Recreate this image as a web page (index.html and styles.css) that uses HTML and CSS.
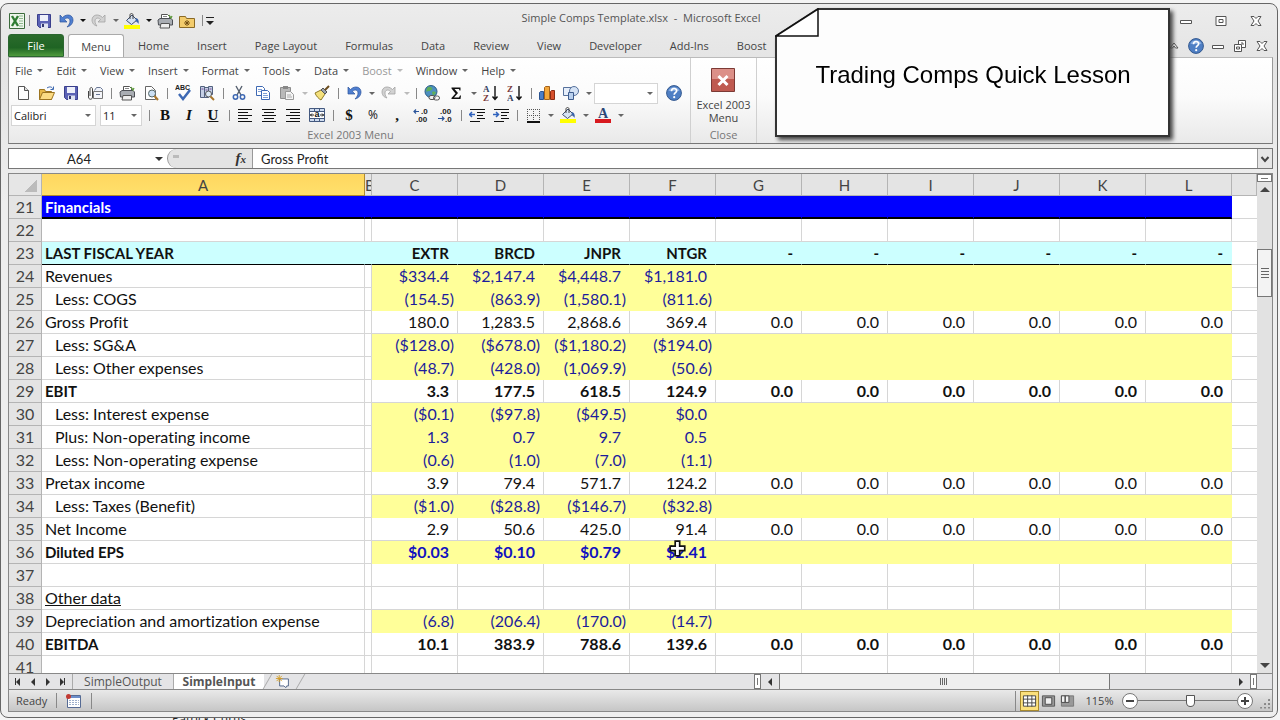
FILE: index.html
```html
<!DOCTYPE html>
<html lang="en">
<head>
    <meta charset="UTF-8">
    <meta name="viewport" content="width=device-width, initial-scale=1.0">
    <title>Simple Comps Template.xlsx - Microsoft Excel</title>
    <link rel="stylesheet" href="styles.css">
</head>
<body>
    <svg class="sprite" aria-hidden="true">
        <symbol id="i-excel" viewBox="0 0 16 16"><path d="M.5.5h15v15H.5z" fill="#eef6ec" stroke="#3c6b3c"/><path d="M10 3h4M10 5.500h4M10 8h4M10 10.500h4M10 13h4" stroke="#8fb88f"/><path d="M3 3l6 10M9 3L3 13" stroke="#2f7d32" stroke-width="2.400"/></symbol>
        <symbol id="i-save" viewBox="0 0 16 16"><path d="M1.500 1.500h13v13h-11l-2-2z" fill="#5b62b5" stroke="#3a3f8c"/><path d="M4 2h8v6H4z" fill="#eef0fa"/><path d="M5 10.500h7V15H5z" fill="#dfe3f1"/><path d="M6 11h2v3H6z" fill="#33386e"/></symbol>
        <symbol id="i-undo" viewBox="0 0 16 16"><path d="M2 2v7h7L6.500 6.500C9 4 12 5 12 8c0 2-1 4-3 6 4-1 6-4 6-7 0-5-6-7-10.500-2.500z" fill="#4f7fd0" stroke="#2c539b" stroke-width=".7"/></symbol>
        <symbol id="i-redo" viewBox="0 0 16 16"><path d="M14 2v7H7l2.500-2.500C7 4 4 5 4 8c0 2 1 4 2 5-4-1-5-4-5-6 0-5 6-7 10.500-2.500z" fill="#d2d2d2" stroke="#a2a2a2" stroke-width=".8"/></symbol>
        <symbol id="i-fill" viewBox="0 0 16 16"><path d="M0 12h16v4H0z" fill="#ff0"/><path d="M2.500 7.500L8 2l5 5-5.500 4.500z" fill="#d5e2f3" stroke="#3d4e6d"/><path d="M6 6V2c0-2 3-2 3 0v4" fill="none" stroke="#444"/><path d="M12 5c3 1 3 4 2.500 6-1-2-2-2-3-3z" fill="#3b64a8"/></symbol>
        <symbol id="i-print" viewBox="0 0 16 16"><path d="M4.500 6.500v-5h6l2 2v3" fill="#fff" stroke="#555"/><path d="M6 3.500h4M6 5.500h5" stroke="#888"/><path d="M1 7l2-1.500h11L15.500 7v5h-14z" fill="#a9adb3" stroke="#4c4f55"/><path d="M4 10.500h8.500v4.500H3z" fill="#eee" stroke="#555"/><path d="M12 2l2 3 1-2" fill="none" stroke="#5c9a3a" stroke-width="1.300"/></symbol>
        <symbol id="i-folder" viewBox="0 0 16 16"><path d="M.5 3.500h6l1 2h8v9H.5z" fill="#f3cc6c" stroke="#8a6a26"/><path d="M8 7v6M5 10h6M6 8l4 4M10 8l-4 4" stroke="#6e4b10" stroke-width=".9"/></symbol>
        <symbol id="i-new" viewBox="0 0 16 16"><path d="M3.500 1.500h6l4 4v9h-10z" fill="#fff" stroke="#555"/><path d="M9.500 1.500v4h4" fill="#ddd" stroke="#555"/></symbol>
        <symbol id="i-open" viewBox="0 0 16 16"><path d="M.5 4.500h5l1 2h6v8H.5z" fill="#e8b949" stroke="#9c7420"/><path d="M.5 14.500l3-7h12l-3 7z" fill="#fbdb83" stroke="#9c7420"/><path d="M8 3c3-2 5-1 6 1M14.500 1.500v3h-3" fill="none" stroke="#3c68b0"/></symbol>
        <symbol id="i-mail" viewBox="0 0 16 16"><path d="M7.500 5.500l2-3h4l2 2v3" fill="#eef1f8" stroke="#687694"/><path d="M6.500 6.500h9v7h-9z" fill="#f4f5f9" stroke="#777"/><path d="M9 9.500h4" stroke="#687694"/><path d="M1.500 6v6c0 3 4 3 4 0V4c0-2-2.500-2-2.500 0v7" fill="none" stroke="#444"/></symbol>
        <symbol id="i-preview" viewBox="0 0 16 16"><path d="M2.500 1.500h6l4 4v9h-10z" fill="#fff" stroke="#666"/><circle cx="9" cy="8.500" r="3.500" fill="#cbdff3" stroke="#566"/><path d="M11.500 11l3.500 4" stroke="#a9762b" stroke-width="2"/></symbol>
        <symbol id="i-spell" viewBox="0 0 16 16"><text x="0" y="5" class="abc">ABC</text><path d="M4 9l4 5 7-9" fill="none" stroke="#3d68b3" stroke-width="2.500"/></symbol>
        <symbol id="i-research" viewBox="0 0 16 16"><path d="M1.500 1.500h4v11h-4zM5.500 2.500h4v10h-4zM9.500 1.500h4v8h-4z" fill="#c5d0e6" stroke="#53617f"/><path d="M2.500 4h2M6.500 5h2M10.500 4h2" stroke="#7a4c9a"/><circle cx="9.500" cy="9" r="3" fill="#dceaf7" stroke="#555"/><path d="M11.500 11.500L15 15" stroke="#a9762b" stroke-width="2"/></symbol>
        <symbol id="i-cut" viewBox="0 0 16 16"><path d="M5 1l5 9M11 1L6 10" stroke="#555f6e" stroke-width="1.400"/><circle cx="4.500" cy="12" r="2.200" fill="none" stroke="#3d68b3" stroke-width="1.500"/><circle cx="11.500" cy="12" r="2.200" fill="none" stroke="#3d68b3" stroke-width="1.500"/></symbol>
        <symbol id="i-copy" viewBox="0 0 16 16"><path d="M1.500 1.500h6l2 2v7h-8z" fill="#fff" stroke="#3d68b3"/><path d="M3 4.500h4M3 6.500h4" stroke="#7d9fd6"/><path d="M6.500 5.500h6l2 2v7h-8z" fill="#fff" stroke="#3d68b3"/><path d="M8 8.500h4M8 10.500h5M8 12.500h5" stroke="#7d9fd6"/></symbol>
        <symbol id="i-paste" viewBox="0 0 16 16"><path d="M1.500 2.500h10v11h-10z" fill="#b9b9b9" stroke="#8d8d8d"/><path d="M4 1h5v3H4z" fill="#888"/><path d="M6.500 6.500h5l3 3v5h-8z" fill="#f4f4f4" stroke="#999"/><path d="M8 10h4M8 12h5" stroke="#aaa"/></symbol>
        <symbol id="i-brush" viewBox="0 0 16 16"><path d="M1 8l6-3 4 4-4 6c-2-1-5-4-6-7z" fill="#f4e07b" stroke="#8e7a26"/><path d="M7 5l2-2 4 4-2 2z" fill="#9aa3ad" stroke="#555"/><path d="M11 5l4-4" stroke="#6b4c1e" stroke-width="2"/></symbol>
        <symbol id="i-link" viewBox="0 0 16 16"><circle cx="7" cy="6.500" r="6" fill="#4c8fc0" stroke="#2a5c86"/><path d="M3 3c2-2 4-1 5 0s-1 3-3 3-3 1-3 1zM8 7c2-1 4 0 4 1l-3 3z" fill="#5fae5a"/><rect x="5" y="10.500" width="6" height="4" rx="2" fill="#eee" stroke="#555"/><rect x="9.500" y="11" width="6" height="4" rx="2" fill="none" stroke="#555"/></symbol>
        <symbol id="i-sigma" viewBox="0 0 16 16"><path d="M3.500 2.500h9v3h-1L11 4H6.500L10 8l-4 4.500h5l1-2h1l-.5 3.500h-9v-1l4-4.500-4-5z" fill="#111"/></symbol>
        <symbol id="i-az" viewBox="0 0 16 16"><text x="0" y="7" class="srt">A</text><text x="0" y="16" class="srt srt-z">Z</text><path d="M12 1v13M9.500 11.500L12 14.500l2.500-3" fill="none" stroke="#111" stroke-width="1.400"/></symbol>
        <symbol id="i-za" viewBox="0 0 16 16"><text x="0" y="7" class="srt srt-z">Z</text><text x="0" y="16" class="srt">A</text><path d="M12 1v13M9.500 11.500L12 14.500l2.500-3" fill="none" stroke="#111" stroke-width="1.400"/></symbol>
        <symbol id="i-chart" viewBox="0 0 16 16"><path d="M.5 7.500l1-1h3v8h-4z" fill="#4b7fc8" stroke="#2b5390"/><path d="M5.500 2.500l1-1h4v13h-5z" fill="#f3a73a" stroke="#a4621c"/><path d="M11.500 6.500l1-1h3v9h-4z" fill="#d6502c" stroke="#8a2c14"/></symbol>
        <symbol id="i-shapes" viewBox="0 0 16 16"><path d="M.5 2.500h9v8h-9z" fill="#e6eefa" stroke="#56719c"/><circle cx="11" cy="6" r="4.500" fill="#d4e2f5" stroke="#56719c"/><path d="M5.500 7.500h5v7h-5z" fill="#b9d0ee" stroke="#3e5c8e"/></symbol>
        <symbol id="i-help" viewBox="0 0 16 16"><circle cx="8" cy="8" r="7.400" fill="#4f7fc4" stroke="#34598f"/><path d="M2.500 6c1-5 10-5 11 0z" fill="#86abe0"/><path d="M5.500 6.200c0-3.600 5.200-3.400 5.200-.4 0 1.900-2.500 1.900-2.500 4" fill="none" stroke="#fff" stroke-width="1.700"/><circle cx="8.200" cy="12.200" r="1.100" fill="#fff"/></symbol>
        <symbol id="i-left" viewBox="0 0 16 16"><path d="M1 2.500h14M1 5.500h10M1 8.500h14M1 11.500h10M1 14.500h14" stroke="#111" stroke-width="1.200"/></symbol>
        <symbol id="i-center" viewBox="0 0 16 16"><path d="M1 2.500h14M3 5.500h10M1 8.500h14M3 11.500h10M1 14.500h14" stroke="#111" stroke-width="1.200"/></symbol>
        <symbol id="i-right" viewBox="0 0 16 16"><path d="M1 2.500h14M5 5.500h10M1 8.500h14M5 11.500h10M1 14.500h14" stroke="#111" stroke-width="1.200"/></symbol>
        <symbol id="i-merge" viewBox="0 0 16 16"><path d="M.5 1.500h15v13H.5z" fill="#cfdcf0" stroke="#44597f"/><path d="M5.500 1.500v3M10.500 1.500v3M5.500 11.500v3M10.500 11.500v3M.5 4.500h15M.5 11.500h15" stroke="#44597f"/><path d="M1 5h14v6H1z" fill="#fff"/><path d="M1 8h4M3 6.500L1.500 8 3 9.500M15 8h-4M13 6.500L14.500 8 13 9.500" fill="none" stroke="#222"/><text x="5.500" y="10" class="mrg">a</text></symbol>
        <symbol id="i-dec-in" viewBox="0 0 16 16"><path d="M1 4.500h5M3 2.500l-2 2 2 2" fill="none" stroke="#2b559b" stroke-width="1.200"/><text x="8" y="7" class="dec">.0</text><text x="3" y="15" class="dec">.00</text></symbol>
        <symbol id="i-dec-out" viewBox="0 0 16 16"><text x="3" y="7" class="dec">.00</text><path d="M1 11.500h6M5 9.500l2 2-2 2" fill="none" stroke="#2b559b" stroke-width="1.200"/><text x="8" y="15" class="dec">.0</text></symbol>
        <symbol id="i-outdent" viewBox="0 0 16 16"><path d="M1 2.500h15M8 5.500h8M8 8.500h6M8 11.500h8M1 14.500h10" stroke="#111" stroke-width="1.200"/><path d="M0 7.500h6M3 5L.5 7.500 3 10" fill="none" stroke="#2f62bd" stroke-width="1.500"/></symbol>
        <symbol id="i-indent" viewBox="0 0 16 16"><path d="M1 2.500h15M8 5.500h8M8 8.500h6M8 11.500h8M1 14.500h10" stroke="#111" stroke-width="1.200"/><path d="M0 7.500h6M3 5l2.500 2.500L3 10" fill="none" stroke="#2f62bd" stroke-width="1.500"/></symbol>
        <symbol id="i-border" viewBox="0 0 16 16"><path d="M2 2.500h13M2 8.500h13M2.500 2v12M8.500 2v12M14.500 2v12" stroke="#555" stroke-dasharray="1 1"/><path d="M2 15h13" stroke="#111" stroke-width="2"/></symbol>
        <symbol id="i-color" viewBox="0 0 16 16"><text x="3" y="11" class="clr">A</text><path d="M0 12h16v4H0z" fill="#d8191f"/></symbol>
        <symbol id="i-close-menu" viewBox="0 0 24 24"><path d="M.5.5h23v23H.5z" fill="#bf5a50" stroke="#7c3a35"/><path d="M1 1h22v10H1z" fill="#dc9088"/><path d="M7.500 8l9 9M16.500 8l-9 9" stroke="#fff" stroke-width="3"/></symbol>
        <symbol id="i-min" viewBox="0 0 12 12"><path d="M.5 5.500h11v3H.5z" fill="#fff" stroke="#555"/></symbol>
        <symbol id="i-max" viewBox="0 0 12 12"><path d="M1 1.500h10v9H1z" fill="#fff" stroke="#555"/><path d="M4 4.500h4v3H4z" fill="none" stroke="#555"/></symbol>
        <symbol id="i-restore" viewBox="0 0 12 12"><path d="M4.500.5h7v7h-7z" fill="#fff" stroke="#555"/><path d="M.5 4.500h7v7h-7z" fill="#fff" stroke="#555"/><path d="M2.500 7h3v2h-3zM7 3h2v2" fill="none" stroke="#555"/></symbol>
        <symbol id="i-x" viewBox="0 0 12 12"><path d="M1 1.500h3l2 2 2-2h3L8 6l3 4.500H8l-2-2-2 2H1L4 6z" fill="#fff" stroke="#555"/></symbol>
        <symbol id="i-caret" viewBox="0 0 12 12"><path d="M2 8l4-5 4 5H7.500L6 6 4.500 8z" fill="#fff" stroke="#555"/></symbol>
        <symbol id="i-macro" viewBox="0 0 16 16"><path d="M2.500 2.500h13v12h-13z" fill="#fff" stroke="#566b94"/><path d="M3 3h12v2H3z" fill="#6d8fcb"/><path d="M4 7.500h10M4 9.500h10M4 11.500h10" stroke="#9fb0cc" stroke-dasharray="2 1"/><circle cx="3.500" cy="3.500" r="2.500" fill="#c23a32"/></symbol>
        <symbol id="i-newsheet" viewBox="0 0 16 16"><path d="M4.500 4.500h10v8h-2l-1 2-2-2h-5z" fill="#fff" stroke="#44597f"/><path d="M4 0v8M0 4h8M1 1l6 6M7 1L1 7" stroke="#d39b24"/></symbol>
        <symbol id="i-normal" viewBox="0 0 16 16"><path d="M1.500 2.500h13v11h-13z" fill="#fff" stroke="#444"/><path d="M1 6h14M1 10h14M6 2v12M10.500 2v12" stroke="#444"/></symbol>
        <symbol id="i-layout" viewBox="0 0 16 16"><path d="M1.500 2.500h13v11h-13z" fill="#999" stroke="#555"/><path d="M4.500 4.500h7v7h-7z" fill="#eee" stroke="#444"/></symbol>
        <symbol id="i-break" viewBox="0 0 16 16"><path d="M1.500 2.500h13v11h-13z" fill="#999" stroke="#777"/><path d="M1.500 2.500h4v7h-4zM5.500 2.500h4v7h-4z" fill="#f2f2f2" stroke="#444"/></symbol>
    </svg>

    <div class="desktop">
    <div class="window">
        <header class="titlebar">
            <div class="quick">
                <svg class="icon"><use href="#i-excel"/></svg>
                <i class="sep"></i>
                <button class="tool" aria-label="Save"><svg class="icon"><use href="#i-save"/></svg></button>
                <button class="tool" aria-label="Undo"><svg class="icon"><use href="#i-undo"/></svg></button><i class="drop dark"></i>
                <button class="tool" aria-label="Redo"><svg class="icon"><use href="#i-redo"/></svg></button><i class="drop"></i>
                <button class="tool" aria-label="Fill color"><svg class="icon"><use href="#i-fill"/></svg></button><i class="drop dark"></i>
                <button class="tool" aria-label="Print"><svg class="icon"><use href="#i-print"/></svg></button>
                <button class="tool" aria-label="Open folder"><svg class="icon"><use href="#i-folder"/></svg></button>
                <i class="sep"></i>
                <button class="customize" aria-label="Customize toolbar"></button>
            </div>
            <h1 class="title">Simple Comps Template.xlsx&nbsp; -&nbsp; Microsoft Excel</h1>
            <div class="controls">
                <button aria-label="Minimize"><svg><use href="#i-min"/></svg></button>
                <button aria-label="Maximize"><svg><use href="#i-max"/></svg></button>
                <button aria-label="Close"><svg><use href="#i-x"/></svg></button>
            </div>
        </header>

        <nav class="tabs">
            <button class="file">File</button>
            <button class="active">Menu</button>
            <button>Home</button>
            <button>Insert</button>
            <button>Page Layout</button>
            <button>Formulas</button>
            <button>Data</button>
            <button>Review</button>
            <button>View</button>
            <button>Developer</button>
            <button>Add-Ins</button>
            <button>Boost</button>
            <div class="controls small">
                <button aria-label="Collapse ribbon"><svg><use href="#i-caret"/></svg></button>
                <button aria-label="Help"><svg class="icon"><use href="#i-help"/></svg></button>
                <button aria-label="Minimize workbook"><svg><use href="#i-min"/></svg></button>
                <button aria-label="Restore workbook"><svg><use href="#i-restore"/></svg></button>
                <button aria-label="Close workbook"><svg><use href="#i-x"/></svg></button>
            </div>
        </nav>

        <section class="ribbon">
            <div class="group group-menu">
                <div class="menus">
                    <button>File</button>
                    <button>Edit</button>
                    <button>View</button>
                    <button>Insert</button>
                    <button>Format</button>
                    <button>Tools</button>
                    <button>Data</button>
                    <button class="off">Boost</button>
                    <button>Window</button>
                    <button>Help</button>
                </div>
                <div class="toolbar">
                    <button class="tool" aria-label="New"><svg class="icon"><use href="#i-new"/></svg></button>
                    <button class="tool" aria-label="Open"><svg class="icon"><use href="#i-open"/></svg></button>
                    <button class="tool" aria-label="Save"><svg class="icon"><use href="#i-save"/></svg></button>
                    <button class="tool" aria-label="Mail"><svg class="icon"><use href="#i-mail"/></svg></button>
                    <i class="sep"></i>
                    <button class="tool" aria-label="Print"><svg class="icon"><use href="#i-print"/></svg></button>
                    <button class="tool" aria-label="Print preview"><svg class="icon"><use href="#i-preview"/></svg></button>
                    <i class="sep"></i>
                    <button class="tool" aria-label="Spelling"><svg class="icon"><use href="#i-spell"/></svg></button>
                    <button class="tool" aria-label="Research"><svg class="icon"><use href="#i-research"/></svg></button>
                    <i class="sep"></i>
                    <button class="tool" aria-label="Cut"><svg class="icon"><use href="#i-cut"/></svg></button>
                    <button class="tool" aria-label="Copy"><svg class="icon"><use href="#i-copy"/></svg></button>
                    <button class="tool" aria-label="Paste"><svg class="icon"><use href="#i-paste"/></svg></button><i class="drop off"></i>
                    <button class="tool" aria-label="Format painter"><svg class="icon"><use href="#i-brush"/></svg></button>
                    <i class="sep"></i>
                    <button class="tool" aria-label="Undo"><svg class="icon"><use href="#i-undo"/></svg></button><i class="drop"></i>
                    <button class="tool" aria-label="Redo"><svg class="icon"><use href="#i-redo"/></svg></button><i class="drop off"></i>
                    <i class="sep"></i>
                    <button class="tool" aria-label="Hyperlink"><svg class="icon"><use href="#i-link"/></svg></button>
                    <button class="tool" aria-label="AutoSum"><svg class="icon"><use href="#i-sigma"/></svg></button><i class="drop"></i>
                    <button class="tool" aria-label="Sort ascending"><svg class="icon"><use href="#i-az"/></svg></button>
                    <button class="tool" aria-label="Sort descending"><svg class="icon"><use href="#i-za"/></svg></button>
                    <i class="sep"></i>
                    <button class="tool" aria-label="Chart"><svg class="icon"><use href="#i-chart"/></svg></button>
                    <button class="tool" aria-label="Shapes"><svg class="icon"><use href="#i-shapes"/></svg></button><i class="drop"></i>
                    <label class="combo combo-zoom"><select aria-label="Zoom"><option></option></select></label>
                    <button class="tool" aria-label="Help"><svg class="icon"><use href="#i-help"/></svg></button>
                </div>
                <div class="toolbar">
                    <label class="combo combo-font"><select aria-label="Font"><option>Calibri</option></select></label>
                    <label class="combo combo-size"><select aria-label="Font size"><option>11</option></select></label>
                    <i class="sep"></i>
                    <button class="tool glyph"><b>B</b></button>
                    <button class="tool glyph"><i>I</i></button>
                    <button class="tool glyph"><u>U</u></button>
                    <i class="sep"></i>
                    <button class="tool" aria-label="Align left"><svg class="icon"><use href="#i-left"/></svg></button>
                    <button class="tool" aria-label="Center"><svg class="icon"><use href="#i-center"/></svg></button>
                    <button class="tool" aria-label="Align right"><svg class="icon"><use href="#i-right"/></svg></button>
                    <button class="tool" aria-label="Merge and center"><svg class="icon"><use href="#i-merge"/></svg></button>
                    <i class="sep"></i>
                    <button class="tool glyph">$</button>
                    <button class="tool glyph pct">%</button>
                    <button class="tool glyph">,</button>
                    <button class="tool" aria-label="Increase decimal"><svg class="icon"><use href="#i-dec-in"/></svg></button>
                    <button class="tool" aria-label="Decrease decimal"><svg class="icon"><use href="#i-dec-out"/></svg></button>
                    <i class="sep"></i>
                    <button class="tool" aria-label="Decrease indent"><svg class="icon"><use href="#i-outdent"/></svg></button>
                    <button class="tool" aria-label="Increase indent"><svg class="icon"><use href="#i-indent"/></svg></button>
                    <i class="sep"></i>
                    <button class="tool" aria-label="Borders"><svg class="icon"><use href="#i-border"/></svg></button><i class="drop"></i>
                    <button class="tool" aria-label="Fill color"><svg class="icon"><use href="#i-fill"/></svg></button><i class="drop"></i>
                    <button class="tool" aria-label="Font color"><svg class="icon"><use href="#i-color"/></svg></button><i class="drop"></i>
                </div>
                <div class="caption">Excel 2003 Menu</div>
            </div>
            <div class="group group-close">
                <button class="big"><svg><use href="#i-close-menu"/></svg>Excel 2003<br>Menu</button>
                <div class="caption">Close</div>
            </div>
        </section>

        <div class="formula">
            <label class="namebox"><input value="A64" aria-label="Name box"></label>
            <div class="fx"><i class="knob"></i><button>f<small>x</small></button></div>
            <input class="value" value="Gross Profit" aria-label="Formula">
            <button class="expand" aria-label="Expand"><svg viewBox="0 0 10 10"><path d="M1.500 3L5 7l3.500-4" fill="none" stroke="#444" stroke-width="2"/></svg></button>
        </div>

        <div class="sheet">
            <div class="grid-wrap">
                <table class="grid">
                    <colgroup>
                        <col class="c-num"><col class="c-a"><col class="c-b">
                        <col class="c-n" span="10"><col>
                    </colgroup>
                    <thead>
                        <tr>
                            <th class="corner"></th><th class="picked">A</th><th>B</th>
                            <th>C</th><th>D</th><th>E</th><th>F</th><th>G</th><th>H</th><th>I</th><th>J</th><th>K</th><th>L</th><th></th>
                        </tr>
                    </thead>
                    <tbody id="rows"></tbody>
                </table>
                <svg class="pointer" viewBox="0 0 16 16"><path d="M5.500 1h4v4.500H14v4H9.500V14h-4V9.500H1v-4h4.500z" fill="#fff" stroke="#111" stroke-width="1.500"/></svg>
            </div>
            <div class="vscroll">
                <i class="split"></i>
                <i class="arrow up"></i>
                <div class="vtrack"><i class="thumb"></i></div>
                <i class="arrow down"></i>
            </div>
        </div>

        <div class="sheetbar">
            <div class="sheetnav">
                <button aria-label="First sheet"><i class="bar"></i><i class="tri l"></i></button>
                <button aria-label="Previous sheet"><i class="tri l"></i></button>
                <button aria-label="Next sheet"><i class="tri r"></i></button>
                <button aria-label="Last sheet"><i class="tri r"></i><i class="bar"></i></button>
            </div>
            <button class="sheettab">SimpleOutput</button>
            <button class="sheettab on">SimpleInput</button>
            <button class="sheettab add" aria-label="Insert sheet"><svg class="icon"><use href="#i-newsheet"/></svg></button>
            <div class="hscroll">
                <i class="hsplit"></i>
                <i class="tri l"></i>
                <div class="htrack"><i class="thumb"></i></div>
                <i class="tri r"></i>
                <i class="hsplit"></i>
            </div>
        </div>

        <footer class="status">
            <span class="ready">Ready</span>
            <button class="macro" aria-label="Record macro"><svg class="icon"><use href="#i-macro"/></svg></button>
            <div class="views">
                <button class="on" aria-label="Normal"><svg class="icon"><use href="#i-normal"/></svg></button>
                <button aria-label="Page layout"><svg class="icon"><use href="#i-layout"/></svg></button>
                <button aria-label="Page break"><svg class="icon"><use href="#i-break"/></svg></button>
            </div>
            <span class="percent">115%</span>
            <button class="round" aria-label="Zoom out"></button>
            <input class="zoom" type="range" min="0" max="100" value="53" aria-label="Zoom">
            <button class="round plus" aria-label="Zoom in"></button>
            <i class="grip"></i>
        </footer>
    </div>
    <div class="behind">Patrick Curtis</div>

    <aside class="callout">
        <svg viewBox="0 0 396 130"><path d="M43 1h351v127H1V28z" fill="#fdfdfd" stroke="#333" stroke-width="2"/><path d="M43 1v27H1z" fill="#fff" stroke="#111" stroke-width="1.500"/></svg>
        <p>Trading Comps Quick Lesson</p>
    </aside>
    </div>

    <script>
        const zeros = ['0.0', '0.0', '0.0', '0.0', '0.0', '0.0'];
        const dashes = ['-', '-', '-', '-', '-', '-'];

        // [label, values, row classes]
        const rows = [
            ['Financials', [], 'banner'],
            ['', [], ''],
            ['LAST FISCAL YEAR', ['EXTR', 'BRCD', 'JNPR', 'NTGR', ...dashes], 'year'],
            ['Revenues', ['$334.4', '$2,147.4', '$4,448.7', '$1,181.0'], 'entry'],
            ['Less: COGS', ['(154.5)', '(863.9)', '(1,580.1)', '(811.6)'], 'entry sub'],
            ['Gross Profit', ['180.0', '1,283.5', '2,868.6', '369.4', ...zeros], ''],
            ['Less: SG&amp;A', ['($128.0)', '($678.0)', '($1,180.2)', '($194.0)'], 'entry sub'],
            ['Less: Other expenses', ['(48.7)', '(428.0)', '(1,069.9)', '(50.6)'], 'entry sub'],
            ['EBIT', ['3.3', '177.5', '618.5', '124.9', ...zeros], 'bold'],
            ['Less: Interest expense', ['($0.1)', '($97.8)', '($49.5)', '$0.0'], 'entry sub'],
            ['Plus: Non-operating income', ['1.3', '0.7', '9.7', '0.5'], 'entry sub'],
            ['Less: Non-operating expense', ['(0.6)', '(1.0)', '(7.0)', '(1.1)'], 'entry sub'],
            ['Pretax income', ['3.9', '79.4', '571.7', '124.2', ...zeros], ''],
            ['Less: Taxes (Benefit)', ['($1.0)', '($28.8)', '($146.7)', '($32.8)'], 'entry sub'],
            ['Net Income', ['2.9', '50.6', '425.0', '91.4', ...zeros], ''],
            ['Diluted EPS', ['$0.03', '$0.10', '$0.79', '$2.41'], 'entry bold'],
            ['', [], ''],
            ['<u>Other data</u>', [], ''],
            ['Depreciation and amortization expense', ['(6.8)', '(206.4)', '(170.0)', '(14.7)'], 'entry'],
            ['EBITDA', ['10.1', '383.9', '788.6', '139.6', ...zeros], 'bold'],
            ['', [], '']
        ];

        document.getElementById('rows').innerHTML = rows.map(([label, values, cls], i) => {
            let cells = '';
            for (let c = 0; c < 10; c++) {
                const value = values[c] || '';
                cells += `<td class="num${value.endsWith(')') ? ' neg' : ''}">${value}</td>`;
            }
            return `<tr class="${cls}"><th>${i + 21}</th><td class="label">${label}</td><td class="gap"></td>${cells}<td class="rest"></td></tr>`;
        }).join('');
    </script>
</body>
</html>
```

FILE: styles.css
```css
* {
    box-sizing: border-box;
}
body {
    margin: 0;
    font-family: "Open Sans", "Noto Sans", sans-serif;
    font-size: 12px;
    color: #444;
    background: #f4f4f4;
}
button, input, select {
    font: inherit;
    color: inherit;
    border: none;
    background: none;
    padding: 0;
    margin: 0;
    border-radius: 0;
    outline: 0;
}
.sprite {
    display: none;
}
.desktop {
    position: relative;
    height: 100vh;
    padding: 3px 2px 0 0;
    overflow: hidden;
    display: flex;
    flex-direction: column;
}
.window {
    flex: 1;
    min-height: 0;
    display: flex;
    flex-direction: column;
    padding: 0 4px 5px 7px;
    border: 1px solid #666;
    border-radius: 8px;
    background: linear-gradient(#ececec, #e4e4e4 60px, #eee 200px);
}
.behind {
    height: 2px;
    padding-left: 172px;
    font-size: 12px;
    line-height: 2px;
    color: #222;
    overflow: hidden;
}
.icon {
    width: 16px;
    height: 16px;
    display: block;
    overflow: visible;
}

/* title bar */
.titlebar {
    display: flex;
    align-items: center;
    height: 30px;
}
.quick {
    display: flex;
    align-items: center;
    flex: 1;
    padding: 3px 0 0 1px;
}
.tool {
    width: 24px;
    height: 20px;
    display: flex;
    align-items: center;
    justify-content: center;
}
.quick .tool {
    width: 22px;
}
.sep {
    width: 8px;
    height: 11px;
    background: linear-gradient(#888, #888) center / 1px 100% no-repeat;
}
.drop {
    width: 11px;
    display: flex;
    justify-content: center;
}
.quick .drop {
    width: 11px;
}
.drop::after,
.menus button::after,
.combo::after,
.namebox::after {
    content: "";
    border: 3px solid transparent;
    border-top: 3px solid #666;
    border-bottom: 0;
}
.drop.dark::after {
    border-top-color: #111;
}
.drop.off::after,
.menus .off::after {
    border-top-color: #bbb;
}
.customize {
    width: 8px;
    height: 8px;
    border-top: 1px solid #222;
    display: flex;
    align-items: flex-end;
}
.customize::after {
    content: "";
    border: 4px solid transparent;
    border-top-color: #222;
    border-bottom: 0;
}
.title {
    margin: 0;
    padding-bottom: 2px;
    font-size: 11px;
    font-weight: normal;
    line-height: 16px;
    color: #555;
}
.controls {
    display: flex;
    flex: 1;
    justify-content: flex-end;
    align-items: center;
    padding-top: 3px;
}
.controls button {
    width: 35px;
    display: flex;
    justify-content: center;
}
.controls svg {
    width: 12px;
    height: 12px;
}
.controls svg.icon {
    width: 16px;
    height: 16px;
}

/* ribbon tabs */
.tabs {
    display: flex;
    height: 23px;
    font-size: 11px;
}
.tabs > button {
    padding: 0 14px;
    border-radius: 3px 3px 0 0;
}
.tabs > .file {
    width: 56px;
    margin-right: 4px;
    color: #fff;
    background: linear-gradient(#2b6b2c, #1f6424 60%, #4f9a3d);
    border: 1px solid #2b6630;
}
.tabs > .active {
    width: 56px;
    padding: 0;
    background: #fff;
    border: 1px solid #aaa;
    border-bottom: 0;
}
.controls.small {
    padding: 0;
}
.controls.small button {
    width: 22px;
}

/* ribbon */
.ribbon {
    display: flex;
    height: 87px;
    border: 1px solid #999;
    border-top-color: #bbb;
    border-bottom: 1px solid #777;
    background: linear-gradient(#fff, #fbfbfb 45%, #e9e9e9);
}
.group {
    display: flex;
    flex-direction: column;
    padding-bottom: 1px;
    border-right: 1px solid #d0d0d0;
}
.group-menu {
    width: 682px;
    padding-left: 2px;
}
.group-close {
    width: 66px;
    align-items: center;
}
.menus {
    display: flex;
    height: 24px;
    font-size: 11px;
    padding-left: 4px;
}
.menus button {
    display: flex;
    align-items: center;
    gap: 5px;
    margin-right: 13px;
}
.menus .off {
    color: #999;
}
.toolbar {
    display: flex;
    align-items: center;
    height: 22px;
}
.combo {
    position: relative;
    height: 21px;
    border: 1px solid #d5d5d5;
    background: #fff;
    display: flex;
    align-items: center;
}
.combo::after {
    position: absolute;
    right: 4px;
}
.combo select {
    appearance: none;
    width: 100%;
    padding-left: 2px;
    font-size: 11px;
    color: #222;
}
.combo-font {
    width: 85px;
    margin-right: 4px;
}
.combo-size {
    width: 42px;
    margin-right: 3px;
}
.combo-zoom {
    width: 64px;
    margin-right: 4px;
}
.glyph {
    font: bold 15px/16px "Liberation Serif", serif;
    color: #111;
}
.glyph.pct {
    font: 12px/16px "Open Sans", sans-serif;
}
.caption {
    margin-top: auto;
    text-align: center;
    font-size: 11px;
    line-height: 15px;
    color: #777;
}
.big {
    display: flex;
    flex-direction: column;
    align-items: center;
    padding-top: 10px;
    font-size: 11px;
    line-height: 13px;
}
.big svg {
    width: 24px;
    height: 24px;
    margin-bottom: 6px;
}
.abc {
    font: bold 7px "Liberation Sans", sans-serif;
    fill: #222;
}
.srt {
    font: bold 9px "Liberation Serif", serif;
    fill: #33415f;
}
.srt-z {
    fill: #7a3b3b;
}
.dec {
    font: bold 8px "Liberation Sans", sans-serif;
    fill: #222;
}
.mrg {
    font: bold 9px "Liberation Sans", sans-serif;
    fill: #111;
}
.clr {
    font: bold 14px "Liberation Serif", serif;
    fill: #2d4777;
}

/* formula bar */
.formula {
    display: flex;
    height: 21px;
    margin: 4px 0;
    border: 1px solid #777;
    background: #fff;
    font-family: Lato, sans-serif;
    font-size: 13px;
    color: #222;
}
.namebox {
    width: 158px;
    display: flex;
    align-items: center;
    padding: 0 4px 0 0;
}
.namebox::after {
    border-width: 4px 4px 0;
    border-top-color: #333;
}
.namebox input {
    flex: 1;
    min-width: 0;
    padding-right: 6px;
    text-align: center;
}
.fx {
    width: 86px;
    display: flex;
    align-items: center;
    justify-content: space-between;
    padding-right: 6px;
    border-right: 1px solid #999;
    border-left: 1px solid #999;
    border-radius: 10px 0 0 10px;
    background: #e4e4e4;
}
.knob {
    width: 6px;
    height: 3px;
    margin: -5px 0 0 5px;
    background: #bbb;
}
.fx button {
    font: italic bold 15px/16px "Liberation Serif", serif;
    color: #333;
}
.fx small {
    font-size: 11px;
}
.value {
    flex: 1;
    padding-left: 8px;
}
.expand {
    width: 15px;
    border-left: 1px solid #999;
    background: #e6e6e6;
    display: flex;
    align-items: center;
    justify-content: center;
}
.expand svg {
    width: 10px;
    height: 10px;
}

/* sheet */
.sheet {
    display: flex;
    flex: 1;
    min-height: 0;
    border: 1px solid #888;
    border-width: 1px 1px 0;
    background: #fff;
}
.grid-wrap {
    position: relative;
    flex: 1;
    min-width: 0;
    overflow: hidden;
}
.grid {
    width: 100%;
    table-layout: fixed;
    border-collapse: separate;
    border-spacing: 0;
    font-family: Lato, sans-serif;
    font-size: 16px;
    font-variant-ligatures: none;
    line-height: 20px;
    color: #111;
}
.c-num {
    width: 33px;
}
.c-a {
    width: 323px;
}
.c-b {
    width: 7px;
}
.c-n {
    width: 86px;
}
.grid th,
.grid td {
    height: 23px;
    padding: 0;
    border-right: 1px solid #d6d6d6;
    border-bottom: 1px solid #d6d6d6;
    white-space: nowrap;
    overflow: hidden;
}
.grid th {
    font-weight: normal;
    color: #444;
    background: #e4e4e4;
    border-color: #b4b4b4;
}
.grid thead th {
    height: 22px;
    font-size: 15px;
}
.grid .picked {
    background: linear-gradient(#ffd75f, #ffe06c);
    border-color: #b08a30;
}
.grid .corner {
    background: linear-gradient(135deg, #e6e6e6 50%, #bbb 50%) 15px 5px / 13px 13px no-repeat #e6e6e6;
}
.grid .label {
    padding-left: 3px;
}
.grid .sub .label {
    padding-left: 13px;
}
.grid .num {
    text-align: right;
    padding-right: 8px;
}
.grid .neg {
    padding-right: 3px;
}
.grid td.rest {
    border-right: 0;
}
.bold td {
    font-weight: bold;
}
.entry .num {
    color: #1c1c9c;
    background: #ffff99;
    border-color: #ffff99;
}
.entry.bold .num {
    color: #1111c0;
}
.bold .label,
.year td,
.banner td {
    font-size: 15px;
}
.banner .label,
.banner .gap,
.banner .num {
    color: #fff;
    font-weight: bold;
    background: #0000ff;
    border-right-color: #0000ff;
    border-bottom: 2px solid #000;
}
.year .label,
.year .gap,
.year .num {
    font-weight: bold;
    background: #ccffff;
    border-right-color: #ccffff;
    border-bottom-color: #000;
}
.pointer {
    position: absolute;
    left: 660px;
    top: 366px;
    width: 18px;
    height: 18px;
}

/* scroll bars */
.vscroll {
    width: 15px;
    display: flex;
    flex-direction: column;
    align-items: center;
    background: #e2e2e2;
}
.split {
    width: 15px;
    height: 8px;
    border: 1px solid #777;
    background: linear-gradient(#777, #777) center / 7px 1px no-repeat #fff;
}
.arrow {
    margin: 5px 0;
    border: 5px solid transparent;
}
.up {
    border-top: 0;
    border-bottom-color: #444;
}
.down {
    border-bottom: 0;
    border-top-color: #444;
}
.vtrack {
    flex: 1;
    width: 15px;
    padding-top: 52px;
}
.vtrack .thumb {
    display: block;
    height: 48px;
    border: 1px solid #777;
    background: repeating-linear-gradient(#666 0 1px, transparent 1px 3px) center / 8px 10px no-repeat #f3f3f3;
}
.sheetbar {
    display: flex;
    height: 17px;
    border: 1px solid #888;
    background: #e4e4e6;
}
.sheetnav {
    display: flex;
    width: 63px;
    padding-left: 1px;
}
.sheetnav button {
    width: 15px;
    display: flex;
    align-items: center;
    justify-content: center;
}
.bar {
    width: 1px;
    height: 7px;
    background: #333;
}
.tri {
    border: 4px solid transparent;
}
.tri.l {
    border-left: 0;
    border-right-color: #333;
}
.tri.r {
    border-right: 0;
    border-left-color: #333;
}
.sheettab {
    width: 102px;
    font-size: 12px;
    line-height: 14px;
    color: #555;
    border: 1px solid #aaa;
    border-width: 0 1px;
}
.sheettab.on {
    width: 90px;
    border: 0;
    font-weight: bold;
    background: #fff;
}
.sheettab.add {
    width: 34px;
    margin-left: 3px;
    padding-left: 8px;
    border-width: 0 1px;
    transform: skewX(-30deg);
}
.add .icon {
    width: 14px;
    height: 14px;
    transform: skewX(30deg);
}
.hscroll {
    width: 41%;
    margin-left: auto;
    padding-right: 15px;
    display: flex;
    align-items: center;
    gap: 7px;
}
.hsplit {
    width: 7px;
    height: 15px;
    border: 1px solid #777;
    background: linear-gradient(#777, #777) center / 1px 7px no-repeat #fff;
}
.htrack {
    flex: 1;
    height: 15px;
}
.htrack .thumb {
    display: block;
    width: 73%;
    height: 15px;
    border: 1px solid #777;
    border-width: 0 1px;
    background: repeating-linear-gradient(90deg, #666 0 1px, transparent 1px 2px) center / 8px 7px no-repeat #efefef;
}

/* status bar */
.status {
    display: flex;
    align-items: center;
    height: 22px;
    border: 1px solid #888;
    border-top: 0;
    background: linear-gradient(#e9e9e9, #c6c6c6);
    font-size: 11px;
}
.ready {
    width: 48px;
    padding-left: 7px;
    border-right: 1px solid #888;
}
.macro {
    width: 35px;
    padding-left: 8px;
    border-right: 1px solid #888;
}
.views {
    display: flex;
    margin-left: auto;
    padding-left: 4px;
    border-left: 1px solid #888;
}
.views button {
    padding: 1px;
    border: 1px solid transparent;
}
.views .icon {
    width: 15px;
}
.views .on {
    border-color: #a98a2d;
    background: #fbe07c;
}
.percent {
    width: 45px;
    text-align: center;
}
.round {
    width: 16px;
    height: 16px;
    border: 1px solid #777;
    border-radius: 50%;
    background: linear-gradient(#444, #444) center / 8px 2px no-repeat #fff;
}
.round.plus {
    background: linear-gradient(#444, #444) center / 8px 2px no-repeat, linear-gradient(#444, #444) center / 2px 8px no-repeat #fff;
}
.zoom {
    appearance: none;
    width: 99px;
    height: 16px;
    background: linear-gradient(#777, #777) center / 100% 1px no-repeat;
}
.zoom::-webkit-slider-thumb {
    appearance: none;
    width: 9px;
    height: 12px;
    border: 1px solid #555;
    border-radius: 1px 1px 5px 5px;
    background: #fff;
}
.grip {
    width: 11px;
    height: 11px;
    margin: 5px 2px 0 6px;
    background: radial-gradient(#888 1px, transparent 1px) 0 0 / 4px 4px;
    clip-path: polygon(100% 0, 100% 100%, 0 100%);
}

/* note lying over the window */
.callout {
    position: absolute;
    left: 775px;
    top: 8px;
    width: 396px;
    height: 130px;
    display: flex;
    align-items: center;
    justify-content: center;
    filter: drop-shadow(3px 3px 2px #444);
}
.callout svg {
    position: absolute;
    width: 396px;
    height: 130px;
}
.callout p {
    position: relative;
    margin: 4px 0 0;
    font: 24px/28px "Liberation Sans", Arial, sans-serif;
    color: #000;
}
```
